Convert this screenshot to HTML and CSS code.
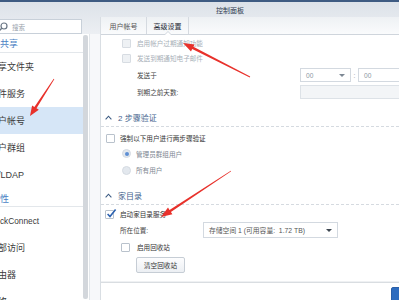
FILE: index.html
```html
<!DOCTYPE html>
<html lang="zh">
<head>
<meta charset="utf-8">
<link rel="stylesheet" href="styles.css">
</head>
<body>
<div class="win">
  <div class="titlebar"><span>控制面板</span></div>
  <div class="main">
    <aside class="side">
      <div class="search-row">
        <div class="search">
          <svg class="mag" viewBox="0 0 11 11"><circle cx="7" cy="5" r="3" fill="none" stroke="#6b7785" stroke-width="1.2"/><line x1="4.8" y1="7.2" x2="1.5" y2="10.5" stroke="#6b7785" stroke-width="1.4"/></svg>
          <span class="ph">搜索</span>
        </div>
      </div>
      <div class="side-body">
        <div class="nav">
          <div class="cat">文件共享</div>
          <div class="item">共享文件夹</div>
          <div class="item">文件服务</div>
          <div class="item sel">用户帐号</div>
          <div class="item">用户群组</div>
          <div class="item">域/LDAP</div>
          <div class="cat cat2">连接性</div>
          <div class="item latin">QuickConnect</div>
          <div class="item">外部访问</div>
          <div class="item">路由器</div>
          <div class="item">网络</div>
        </div>
        <div class="scroll"><div class="thumb"></div></div>
      </div>
    </aside>
    <section class="panel">
      <div class="tabs">
        <div class="tab tab1">用户帐号</div>
        <div class="tab tab2 active">高级设置</div>
      </div>
      <div class="content">
        <div class="row ra"><span class="cb dis"></span><span class="dis-t">启用帐户过期通知功能</span></div>
        <div class="row rb"><span class="cb dis"></span><span class="dis-t">发送到期通知电子邮件</span></div>
        <div class="row rc">
          <span class="lab">发送于</span>
          <span class="sbox w51"><span class="gv">00</span><span class="caret"></span></span>
          <span class="colon">:</span>
          <span class="sbox w50"><span class="gv">00</span></span>
        </div>
        <div class="row rd-row">
          <span class="lab">到期之前天数:</span>
          <span class="inp"></span>
        </div>
        <div class="row sec">
          <svg class="chev" viewBox="0 0 7 5"><polyline points="0.6,4.4 3.5,1.2 6.4,4.4" fill="none" stroke="#3b5a82" stroke-width="1.1"/></svg>
          <span class="sec-t">2 步骤验证</span>
        </div>
        <div class="row chk2"><span class="cb"></span><span>强制以下用户进行两步骤验证</span></div>
        <div class="row rad1"><span class="rdo on"></span><span class="muted">管理员群组用户</span></div>
        <div class="row rad2"><span class="rdo"></span><span class="muted">所有用户</span></div>
        <div class="row sec sec2">
          <svg class="chev" viewBox="0 0 7 5"><polyline points="0.6,4.4 3.5,1.2 6.4,4.4" fill="none" stroke="#3b5a82" stroke-width="1.1"/></svg>
          <span class="sec-t">家目录</span>
        </div>
        <div class="row chk3"><span class="cb on"><svg viewBox="0 0 10 10"><polyline points="1.6,5 4,7.6 9.6,0.6" fill="none" stroke="#2d62b0" stroke-width="1.6"/></svg></span><span>启动家目录服务</span></div>
        <div class="row loc">
          <span class="lab2">所在位置:</span>
          <span class="sbox w135"><span>存储空间 1 (可用容量:&nbsp; 1.72 TB)</span><span class="caret dark"></span></span>
        </div>
        <div class="row rec"><span class="cb"></span><span>启用回收站</span></div>
        <div class="row btnrow"><span class="btn">清空回收站</span></div>
      </div>
      <div class="footer"><span class="primary"></span></div>
    </section>
  </div>
  <svg class="annot" viewBox="0 0 399 300">
    <polygon fill="#e8312b" points="250.2,76.6 193.4,46.8 194.6,44.4 183,43 191.0,51.6 192.2,49.1 249.8,77.4"/>
    <polygon fill="#e8312b" points="53.7,78.8 34.4,106.9 32.1,105.4 30,116 38.8,109.8 36.5,108.3 54.3,79.2"/>
    <polygon fill="#e8312b" points="230.8,170.7 169.5,209.9 168.0,207.6 161,217 172.4,214.3 170.9,212.1 231.2,171.3"/>
  </svg>
</div>
</body>
</html>
```

FILE: styles.css
```css
* { box-sizing: border-box; margin: 0; padding: 0; }
html, body { width: 399px; height: 300px; overflow: hidden; }
body {
  font-family: "Liberation Sans", "Noto Sans CJK SC", sans-serif;
  color: #333;
  background: #f7f8fa;
}
.win {
  position: relative;
  width: 399px;
  height: 300px;
  overflow: hidden;
  display: flex;
  flex-direction: column;
  background: linear-gradient(#dbe1e8 0, #eceff3 34px, #f7f8fa 34px);
}
.titlebar {
  height: 17px;
  flex: none;
  border-top: 2px solid #3e5b82;
  display: flex;
  align-items: center;
  padding-left: 216px;
  font-size: 7px;
  color: #2c3a4e;
}
.main { flex: 1; display: flex; min-height: 0; }

/* sidebar */
.side {
  width: 90px;
  flex: none;
  display: flex;
  flex-direction: column;
  overflow: hidden;
}
.search-row { height: 17px; flex: none; padding-top: 2px; }
.search {
  margin-left: -20px;
  width: 102px;
  height: 15px;
  background: #fff;
  border: 1px solid #c8d0d9;
  display: flex;
  align-items: center;
  padding-left: 16px;
  gap: 4px;
}
.mag { width: 11px; height: 11px; flex: none; }
.ph { font-size: 6.5px; color: #9aa3ad; }
.side-body {
  flex: 1;
  display: flex;
  background: #fff;
  border-right: 1px solid #e2e6ea;
  min-height: 0;
}
.nav { width: 113px; margin-left: -30px; flex: none; font-size: 9px; }
.cat {
  height: 19px;
  display: flex;
  align-items: center;
  padding-left: 12px;
  color: #4a7fc4;
  border-bottom: 1px solid #e3e7eb;
}
.cat2 { padding-top: 3px; }
.item {
  height: 27px;
  display: flex;
  align-items: center;
  padding-left: 19px;
  color: #3a3a3a;
}
.item.latin { font-size: 8.3px; padding-left: 17px; }
.item.sel { background: #d6e6f7; }
.scroll { width: 5px; flex: none; padding-top: 1px; }
.thumb { height: 264px; background: #d3d7dc; border-radius: 2px; }

/* panel */
.panel {
  flex: 1;
  min-width: 0;
  margin-left: 10px;
  display: flex;
  flex-direction: column;
  border-left: 1px solid #d9dee3;
  background: #fff;
  overflow: hidden;
}
.tabs {
  height: 18px;
  flex: none;
  display: flex;
  border-bottom: 1px solid #cfd5dc;
  background: linear-gradient(#eef1f4, #fafbfc);
  font-size: 7px;
}
.tab {
  display: flex;
  align-items: center;
  justify-content: center;
  border-right: 1px solid #d5dae0;
  color: #555;
  position: relative;
}
.tab1 { width: 46px; }
.tab2 { width: 42px; }
.tab.active { color: #1f2a36; }
.tab.active::before {
  content: "";
  position: absolute;
  left: 50%;
  bottom: -1px;
  margin-left: -4px;
  border: 4px solid transparent;
  border-bottom-color: #cfd5dc;
}
.tab.active::after {
  content: "";
  position: absolute;
  left: 50%;
  bottom: -1px;
  margin-left: -3px;
  border: 3px solid transparent;
  border-bottom-color: #fff;
}
.content {
  flex: 1;
  min-height: 0;
  overflow: hidden;
  display: flex;
  flex-direction: column;
  font-size: 6.6px;
  color: #333;
}
.row { display: flex; align-items: center; flex: none; white-space: nowrap; }
.ra { height: 16px; padding-left: 21px; gap: 6px; }
.rb { height: 14px; padding-left: 21px; gap: 6px; }
.dis-t { color: #a7afb8; }
.rc { margin-top: 2px; height: 16px; padding-left: 36px; }
.rd-row { height: 18px; padding-left: 36px; }
.lab { width: 163px; flex: none; color: #444; }
.sbox {
  height: 14px;
  border: 1px solid #d3d9e0;
  background: #fff;
  display: flex;
  align-items: center;
  justify-content: space-between;
  padding: 0 5px;
  flex: none;
  color: #444;
}
.w51 { width: 51px; }
.w50 { width: 50px; }
.w135 { width: 135px; height: 16px; padding: 0 5px 0 5px; color: #555; font-size: 6.8px; }
.gv { color: #8d97a2; }
.colon { width: 7px; text-align: center; color: #8d97a2; flex: none; }
.caret {
  width: 0;
  height: 0;
  border-left: 3px solid transparent;
  border-right: 3px solid transparent;
  border-top: 3px solid #7d8894;
}
.caret.dark { border-top-color: #3d4650; }
.inp {
  width: 100px;
  height: 14px;
  flex: none;
  background: #f3f5f7;
  border: 1px solid #dde2e7;
}
.sec {
  margin-top: 7px;
  height: 19px;
  padding-left: 4px;
  gap: 6px;
  border-bottom: 1px dashed #d5dae0;
}
.sec2 { margin-top: 8px; }
.chev { width: 7px; height: 5px; flex: none; }
.sec-t { font-size: 8px; color: #3f5f8c; }
.chk2 { margin-top: 3px; height: 16px; padding-left: 5px; gap: 5px; }
.rad1 { height: 15px; padding-left: 21px; gap: 5px; }
.rad2 { margin-top: 1px; height: 16px; padding-left: 21px; gap: 5px; }
.muted { color: #7c8691; }
.chk3 { margin-top: 1px; height: 16px; padding-left: 4px; gap: 6px; }
.loc { height: 16px; padding-left: 19px; }
.lab2 { width: 83px; flex: none; color: #444; }
.rec { margin-top: 1px; height: 16px; padding-left: 20px; gap: 7px; }
.btnrow { margin-top: 2px; height: 16px; padding-left: 35px; }
.cb {
  width: 9px;
  height: 9px;
  flex: none;
  border: 1px solid #b9c2cc;
  background: #fff;
  border-radius: 1px;
}
.cb.dis { background: #eef1f4; border-color: #d7dce2; }
.cb.on { position: relative; border-color: #b9c2cc; }
.cb.on svg {
  position: absolute;
  left: 0;
  top: -2px;
  width: 10px;
  height: 10px;
  overflow: visible;
}
.rdo {
  width: 9px;
  height: 9px;
  flex: none;
  border-radius: 50%;
  background: #e3e8ee;
  border: 1px solid #d5dbe2;
  display: flex;
  align-items: center;
  justify-content: center;
}
.rdo.on::after {
  content: "";
  width: 4px;
  height: 4px;
  border-radius: 50%;
  background: #5e8ed3;
}
.btn {
  width: 49px;
  height: 16px;
  border: 1px solid #c6cdd5;
  border-radius: 2px;
  background: linear-gradient(#fdfdfe, #eceff3);
  display: flex;
  align-items: center;
  justify-content: center;
  color: #333;
}
.footer {
  height: 18px;
  flex: none;
  border-top: 1px solid #d9dde1;
  box-shadow: 0 -1px 0 #eff1f3;
  padding: 4px 0 0 290px;
  display: flex;
}
.primary {
  width: 20px;
  height: 16px;
  flex: none;
  background: #2d6cbf;
  border: 1px solid #2a5fa8;
  border-radius: 2px;
}
.annot {
  position: absolute;
  left: 0;
  top: 0;
  width: 399px;
  height: 300px;
  pointer-events: none;
}
```
